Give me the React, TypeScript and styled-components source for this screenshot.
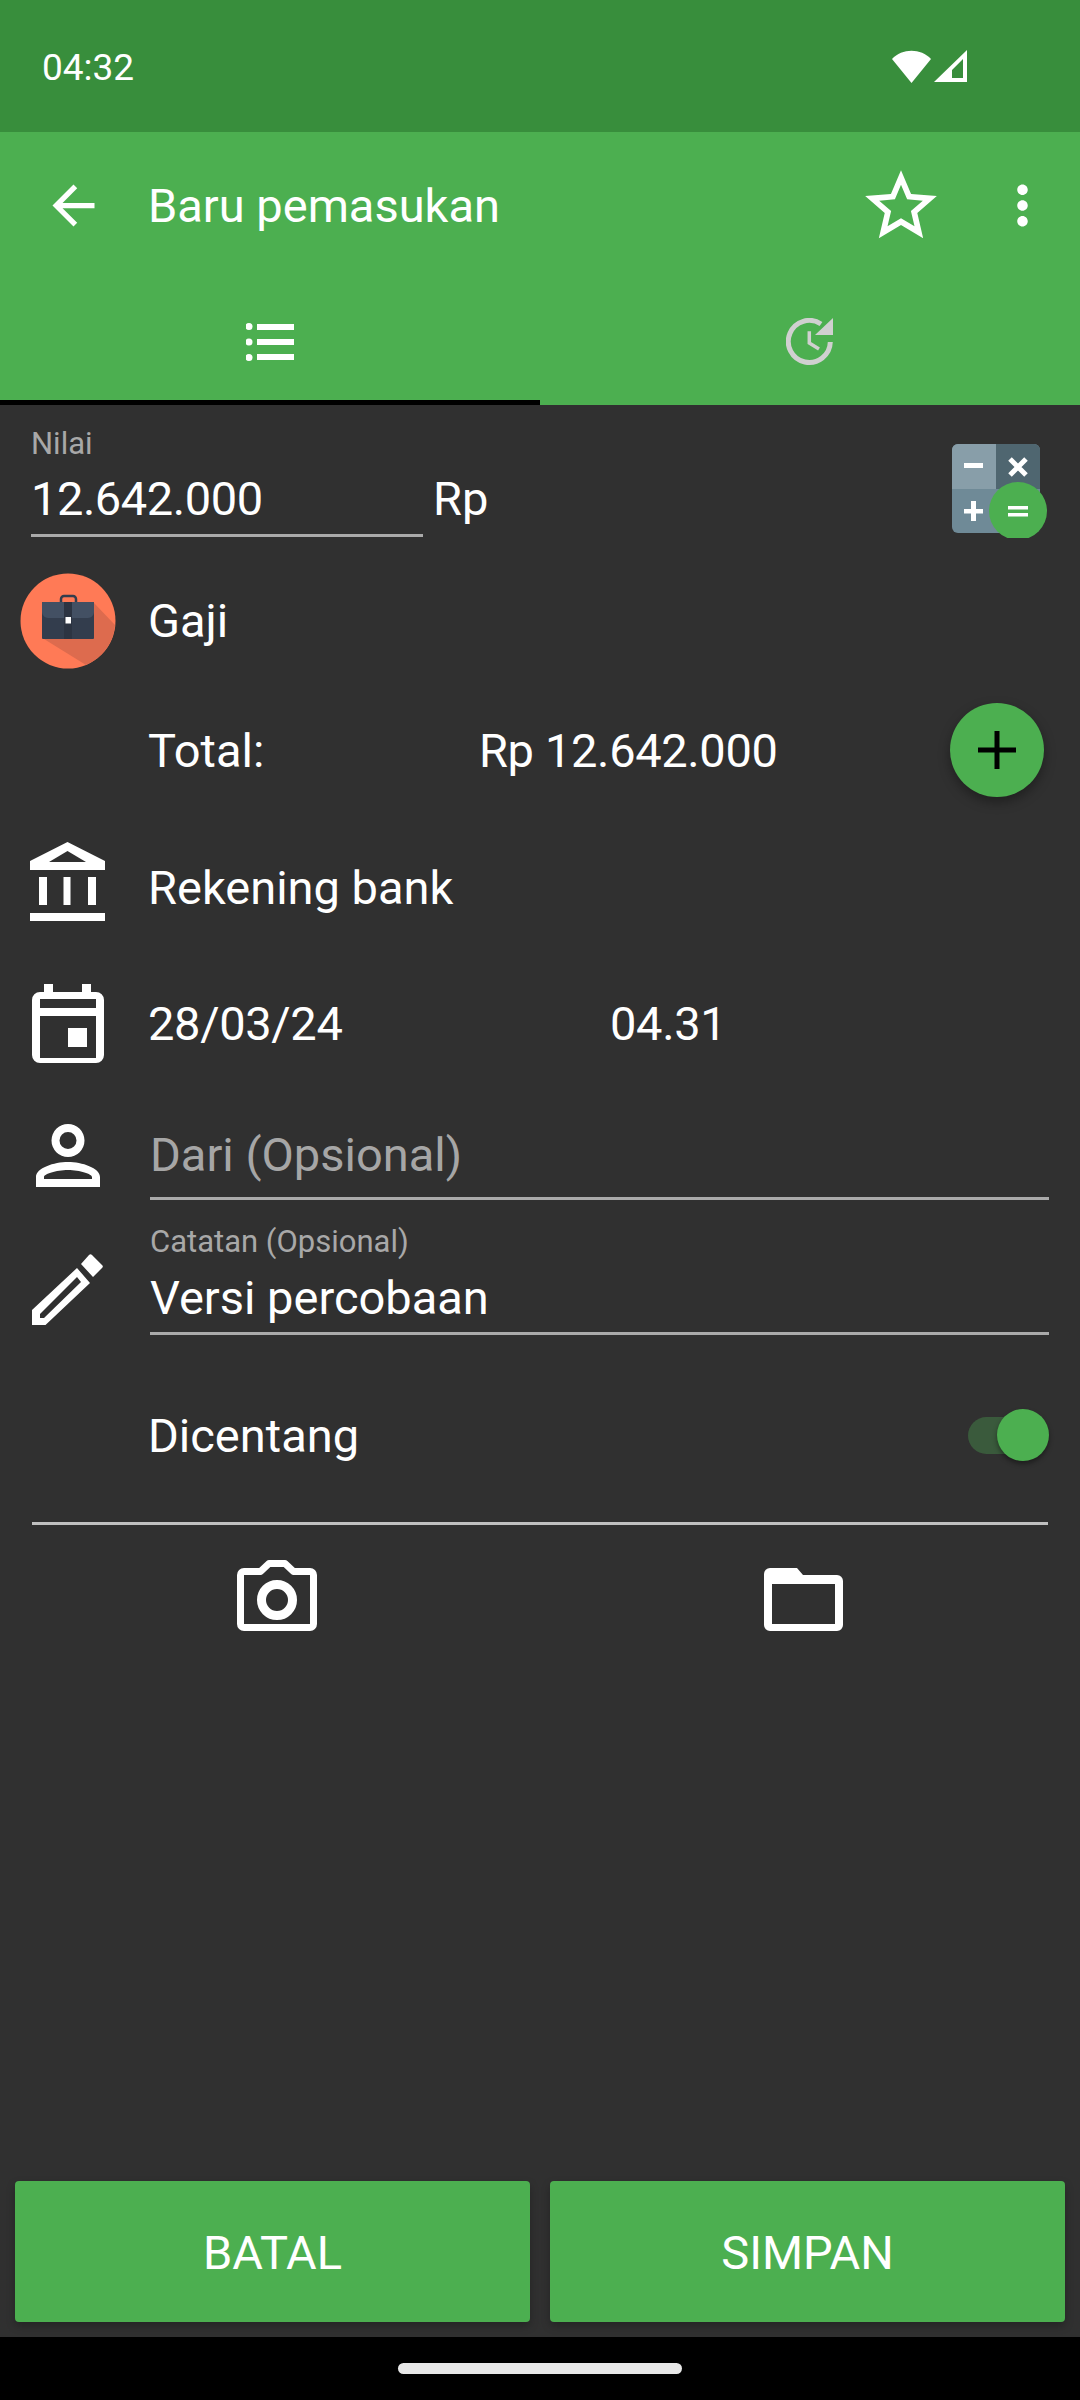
import React from 'react';
import styled, { createGlobalStyle } from 'styled-components';

const GlobalStyle = createGlobalStyle`
  html, body {
    margin: 0;
    padding: 0;
    background: #303030;
  }
  * {
    box-sizing: border-box;
  }
`;

const Screen = styled.div`
  width: 1080px;
  height: 2400px;
  display: flex;
  flex-direction: column;
  background: #303030;
  color: #fff;
  font-family: Roboto, "Liberation Sans", sans-serif;
  font-size: 47px;
  overflow: hidden;
`;

const StatusBar = styled.div`
  height: 132px;
  flex: none;
  display: flex;
  align-items: center;
  justify-content: space-between;
  padding: 2px 113px 0 42px;
  background: #388e3c;
  font-size: 37px;
`;

const StatusIcons = styled.div`
  display: flex;
  align-items: center;
  gap: 3px;
  margin-top: -2px;
`;

const Toolbar = styled.div`
  height: 147px;
  flex: none;
  display: flex;
  align-items: center;
  padding: 0 26px 0 42px;
  background: #4caf50;
`;

const ToolbarTitle = styled.div`
  flex: 1;
  margin-left: 43px;
`;

const ToolbarAction = styled.div<{ $gap: number }>`
  display: flex;
  margin-left: ${(p) => p.$gap}px;
`;

const Tabs = styled.div`
  height: 126px;
  flex: none;
  display: flex;
  background: #4caf50;
`;

const Tab = styled.div<{ $active?: boolean }>`
  flex: 1;
  display: flex;
  align-items: center;
  justify-content: center;
  padding-top: 4px;
  border-bottom: 5px solid ${(p) => (p.$active ? '#000' : 'transparent')};
`;

const Body = styled.div`
  flex: 1;
  display: flex;
  flex-direction: column;
`;

const AmountRow = styled.div`
  height: 156px;
  flex: none;
  display: flex;
  align-items: flex-start;
  padding: 22px 32px 0 31px;
`;

const AmountField = styled.div`
  width: 392px;
  height: 110px;
  border-bottom: 3px solid #aaa;
`;

const FloatLabel = styled.div`
  font-size: 31px;
  line-height: 34px;
  color: #a8a8a8;
`;

const FieldValue = styled.div`
  font-size: 47px;
  line-height: 56px;
  margin-top: 10px;
  letter-spacing: -0.45px;
`;

const Currency = styled.div`
  flex: 1;
  margin: 44px 0 0 10px;
  font-size: 47px;
  line-height: 56px;
`;

const CalculatorSlot = styled.div`
  display: flex;
  margin-top: 15px;
`;

const Row = styled.div<{ $height: number; $top?: number }>`
  height: ${(p) => p.$height}px;
  padding-top: ${(p) => p.$top ?? 0}px;
  flex: none;
  display: flex;
  align-items: center;
`;

const IconSlot = styled.div<{ $top?: number }>`
  width: 147px;
  flex: none;
  display: flex;
  justify-content: center;
  padding-right: 12px;
  margin-top: ${(p) => p.$top ?? 0}px;
`;

const RowText = styled.div<{ $width?: number; $tight?: boolean }>`
  width: ${(p) => (p.$width ? `${p.$width}px` : 'auto')};
  flex: none;
  margin-left: 1px;
  letter-spacing: ${(p) => (p.$tight ? '-0.35px' : 'normal')};
`;

const Fab = styled.div`
  width: 94px;
  height: 94px;
  margin-left: auto;
  margin-right: 36px;
  display: flex;
  align-items: center;
  justify-content: center;
  border-radius: 50%;
  background: #4caf50;
  box-shadow: 0 5px 12px rgba(0, 0, 0, 0.35);
`;

const InputArea = styled.div`
  flex: 1;
  align-self: stretch;
  margin: 0 31px 0 3px;
  display: flex;
  flex-direction: column;
  justify-content: flex-end;
  border-bottom: 3px solid #aaa;
`;

const Placeholder = styled.div`
  line-height: 56px;
  margin-bottom: 14px;
  color: #a6a6a6;
`;

const NoteValue = styled.div`
  line-height: 56px;
  margin: 11px 0 6px;
`;

const SwitchTrack = styled.div`
  position: relative;
  width: 72px;
  height: 37px;
  margin-left: auto;
  margin-right: 40px;
  border-radius: 19px;
  background: #3a5a3c;
`;

const SwitchKnob = styled.div`
  position: absolute;
  top: -8px;
  right: -9px;
  width: 52px;
  height: 52px;
  border-radius: 50%;
  background: #4caf50;
  box-shadow: 0 3px 5px rgba(0, 0, 0, 0.4);
`;

const Divider = styled.div`
  height: 3px;
  flex: none;
  margin: 0 32px;
  background: #c0c0c0;
`;

const AttachRow = styled.div`
  height: 106px;
  flex: none;
  display: grid;
  grid-template-columns: 553px 1fr;
  align-items: end;
`;

const AttachCell = styled.div<{ $shift: number }>`
  display: flex;
  justify-content: center;
  padding-right: ${(p) => p.$shift}px;
`;

const Buttons = styled.div`
  margin-top: auto;
  flex: none;
  display: flex;
  gap: 20px;
  padding: 0 15px 15px;
`;

const ActionButton = styled.div`
  flex: 1;
  height: 141px;
  padding-top: 2px;
  display: flex;
  align-items: center;
  justify-content: center;
  border-radius: 4px;
  background: #4caf50;
  box-shadow: 0 4px 8px rgba(0, 0, 0, 0.25);
`;

const NavBar = styled.div`
  height: 63px;
  flex: none;
  display: flex;
  justify-content: center;
  padding-top: 26px;
  background: #000;
`;

const HomePill = styled.div`
  width: 284px;
  height: 11px;
  border-radius: 6px;
  background: #e8e8e8;
`;

const CalculatorIcon = () => (
  <svg width="96" height="96" viewBox="0 0 96 96">
    <rect x="0" y="2" width="88" height="89" rx="6" fill="#6f8a97" />
    <path d="M6 2h38v45H0V8a6 6 0 0 1 6-6z" fill="#889ea9" />
    <path d="M44 2h38a6 6 0 0 1 6 6v39H44z" fill="#4f6670" />
    <path d="M12 21h19v5H12zM12 67h19v4.500H12zM19 59h5v20h-5z" fill="#fff" />
    <path d="M58 17l16 16M74 17L58 33" stroke="#fff" strokeWidth="5" />
    <circle cx="66" cy="69" r="29" fill="#4caf50" />
    <path d="M56 64h20v3.500H56zM56 71h20v3.500H56z" fill="#fff" />
  </svg>
);

const BriefcaseIcon = () => (
  <svg width="96" height="96" viewBox="0 0 96 96">
    <circle cx="48" cy="48" r="47.500" fill="#ff7a56" />
    <path d="M74 30L95 52A47.500 47.500 0 0 1 66 92L24 66z" fill="#dd6b4e" />
    <rect x="22" y="29" width="52" height="37" rx="1" fill="#333d4d" />
    <path d="M22 30a1 1 0 0 1 1-1h50a1 1 0 0 1 1 1v9c0 3-3 6-6 6H28c-3 0-6-3-6-6z" fill="#435063" />
    <rect x="44" y="29" width="8" height="37" fill="#2c3442" />
    <path d="M41 29v-3a3 3 0 0 1 3-3h9a3 3 0 0 1 3 3v3" fill="none" stroke="#333d4d" strokeWidth="2.500" />
    <rect x="45.500" y="44" width="5.500" height="6.500" fill="#fff" />
  </svg>
);

export default function App() {
  return (
    <Screen>
      <GlobalStyle />
      <StatusBar>
        <span>04:32</span>
        <StatusIcons>
          <svg width="39" height="33" viewBox="0 0 39 33">
            <path d="M0 9C10-2 29-2 39 9L19.500 33z" fill="#fff" />
          </svg>
          <svg width="33" height="33" viewBox="0 0 33 33">
            <path fillRule="evenodd" d="M33 0v32H0zM29 9L18 20v8h11z" fill="#fff" />
          </svg>
        </StatusIcons>
      </StatusBar>
      <Toolbar>
        <svg width="63" height="63" viewBox="0 0 24 24" fill="#fff">
          <path d="M20 11H7.830l5.590-5.590L12 4l-8 8 8 8 1.410-1.410L7.830 13H20z" />
        </svg>
        <ToolbarTitle>Baru pemasukan</ToolbarTitle>
        <ToolbarAction $gap={0}>
          <svg width="86" height="86" viewBox="0 0 24 24" fill="#fff">
            <path d="M22 9.240l-7.190-.620L12 2 9.190 8.630 2 9.240l5.460 4.730L5.820 21 12 17.270 18.180 21l-1.630-7.030L22 9.240zM12 15.400l-3.760 2.270 1-4.280-3.320-2.880 4.380-.380L12 6.100l1.710 4.040 4.380.380-3.320 2.880 1 4.280L12 15.400z" />
          </svg>
        </ToolbarAction>
        <ToolbarAction $gap={47}>
          <svg width="63" height="63" viewBox="0 0 24 24" fill="#fff">
            <path d="M12 8c1.100 0 2-.9 2-2s-.9-2-2-2-2 .9-2 2 .9 2 2 2zm0 2c-1.100 0-2 .9-2 2s.9 2 2 2 2-.9 2-2-.9-2-2-2zm0 6c-1.100 0-2 .9-2 2s.9 2 2 2 2-.9 2-2-.9-2-2-2z" />
          </svg>
        </ToolbarAction>
      </Toolbar>
      <Tabs>
        <Tab $active>
          <svg width="49" height="38" viewBox="0 0 49 38" fill="#fff">
            <circle cx="3" cy="3.500" r="3.500" />
            <circle cx="3" cy="19" r="3.500" />
            <circle cx="3" cy="34.500" r="3.500" />
            <path d="M11 1h37v6H11zM11 16h37v6H11zM11 31h37v6H11z" />
          </svg>
        </Tab>
        <Tab>
          <svg width="48" height="48" viewBox="0 0 48 48" fill="none" stroke="#d0d0d0">
            <path d="M44.300 24A21 21 0 1 1 35 6" strokeWidth="5" />
            <path d="M47 0v17H29z" fill="#d0d0d0" stroke="none" />
            <path d="M23.300 13.300V25L33 31" strokeWidth="3.500" />
          </svg>
        </Tab>
      </Tabs>
      <Body>
        <AmountRow>
          <AmountField>
            <FloatLabel>Nilai</FloatLabel>
            <FieldValue>12.642.000</FieldValue>
          </AmountField>
          <Currency>Rp</Currency>
          <CalculatorSlot>
            <CalculatorIcon />
          </CalculatorSlot>
        </AmountRow>
        <Row $height={119}>
          <IconSlot>
            <BriefcaseIcon />
          </IconSlot>
          <RowText>Gaji</RowText>
        </Row>
        <Row $height={140}>
          <IconSlot />
          <RowText $width={330}>Total:</RowText>
          <RowText $tight>Rp 12.642.000</RowText>
          <Fab>
            <svg width="38" height="38" viewBox="0 0 38 38" fill="#000">
              <path d="M16.500 0h5v16.500H38v5H21.500V38h-5V21.500H0v-5h16.500z" />
            </svg>
          </Fab>
        </Row>
        <Row $height={134}>
          <IconSlot $top={-11}>
            <svg width="75" height="79" viewBox="0 0 75 79" fill="#fff">
              <path fillRule="evenodd" d="M37.500 0L75 19v9H0v-9zM37.500 9L19 20h37z" />
              <path d="M9 35h8v28H9zM33.500 35h7v28h-7zM58 35h8v28h-8zM0 71h75v8H0z" />
            </svg>
          </IconSlot>
          <RowText>Rekening bank</RowText>
        </Row>
        <Row $height={138}>
          <IconSlot>
            <svg width="72" height="79" viewBox="0 0 72 79" fill="#fff">
              <path fillRule="evenodd" d="M12 0h9v8h29V0h9v8h5a8 8 0 0 1 8 8v55a8 8 0 0 1-8 8H8a8 8 0 0 1-8-8V16a8 8 0 0 1 8-8h4zM8 15v9h56v-9zM8 32v42h56V32z" />
              <rect x="36" y="44" width="19" height="19" />
            </svg>
          </IconSlot>
          <RowText $width={461} $tight>28/03/24</RowText>
          <RowText $tight>04.31</RowText>
        </Row>
        <Row $height={108}>
          <IconSlot $top={18}>
            <svg width="64" height="63" viewBox="0 0 64 63" fill="#fff">
              <path fillRule="evenodd" d="M32 0a16.500 16.500 0 1 1 0 33a16.500 16.500 0 0 1 0-33zM32 8a8.500 8.500 0 1 0 0 17a8.500 8.500 0 0 0 0-17zM32 38c14 0 32 6 32 15v10H0V53c0-9 18-15 32-15zM32 46c-12 0-24 4-24 7v2h48v-2c0-3-12-7-24-7z" />
            </svg>
          </IconSlot>
          <InputArea>
            <Placeholder>Dari (Opsional)</Placeholder>
          </InputArea>
        </Row>
        <Row $height={135}>
          <IconSlot $top={43}>
            <svg width="72" height="72" viewBox="0 0 72 72" fill="#fff">
              <path fillRule="evenodd" d="M0 57L45 15L58 30L13.500 72H0zM8 61v4h4L49 29l-4-5z" />
              <path d="M57 2a2 2 0 0 1 3 0l10 10a2 2 0 0 1 0 3l-9 9L49 11z" />
            </svg>
          </IconSlot>
          <InputArea>
            <FloatLabel>Catatan (Opsional)</FloatLabel>
            <NoteValue>Versi percobaan</NoteValue>
          </InputArea>
        </Row>
        <Row $height={187} $top={13}>
          <IconSlot />
          <RowText>Dicentang</RowText>
          <SwitchTrack>
            <SwitchKnob />
          </SwitchTrack>
        </Row>
        <Divider />
        <AttachRow>
          <AttachCell $shift={0}>
            <svg width="80" height="71" viewBox="0 0 80 71">
              <path d="M7 11.500h16.500L32 3.500h16l8.500 8H73a3.500 3.500 0 0 1 3.500 3.500v49a3.500 3.500 0 0 1-3.500 3.500H7A3.500 3.500 0 0 1 3.500 64V15A3.500 3.500 0 0 1 7 11.500z" fill="none" stroke="#fff" strokeWidth="7" strokeLinejoin="round" />
              <circle cx="40" cy="40" r="15.500" fill="none" stroke="#fff" strokeWidth="9" />
            </svg>
          </AttachCell>
          <AttachCell $shift={27}>
            <svg width="79" height="63" viewBox="0 0 79 63" fill="#fff">
              <path fillRule="evenodd" d="M6 0h27l6 7h34a6 6 0 0 1 6 6v44a6 6 0 0 1-6 6H6a6 6 0 0 1-6-6V6a6 6 0 0 1 6-6zM8 16v40h63V16z" />
            </svg>
          </AttachCell>
        </AttachRow>
        <Buttons>
          <ActionButton>BATAL</ActionButton>
          <ActionButton>SIMPAN</ActionButton>
        </Buttons>
      </Body>
      <NavBar>
        <HomePill />
      </NavBar>
    </Screen>
  );
}
